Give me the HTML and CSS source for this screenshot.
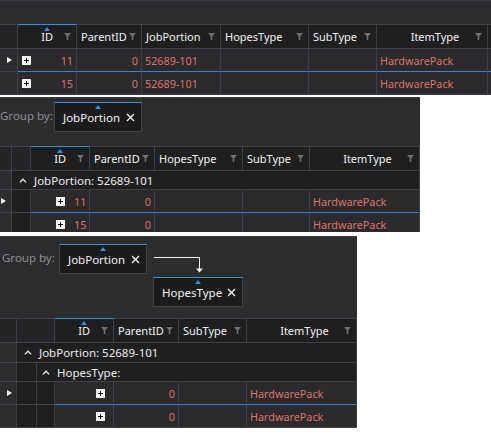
FILE: index.html
```html
<!DOCTYPE html>
<html>
<head>
<meta charset="utf-8">
<link rel="stylesheet" href="styles.css">
</head>
<body>
<!-- Panel 1 -->
<div class="grid g1">
  <div class="groupbar gb1"></div>
  <div class="row head">
    <div class="c ind"></div>
    <div class="c h num sorted"><span class="arrow"></span><span class="t">ID</span><svg class="fn" width="7" height="7" viewBox="0 0 7 7"><path d="M0 0H7L4.3 3.2V7H2.7V3.2Z"/></svg></div>
    <div class="c h"><span class="t">ParentID</span><svg class="fn" width="7" height="7" viewBox="0 0 7 7"><path d="M0 0H7L4.3 3.2V7H2.7V3.2Z"/></svg></div>
    <div class="c h"><span class="t">JobPortion</span><svg class="fn" width="7" height="7" viewBox="0 0 7 7"><path d="M0 0H7L4.3 3.2V7H2.7V3.2Z"/></svg></div>
    <div class="c h"><span class="t">HopesType</span><svg class="fn" width="7" height="7" viewBox="0 0 7 7"><path d="M0 0H7L4.3 3.2V7H2.7V3.2Z"/></svg></div>
    <div class="c h"><span class="t">SubType</span><svg class="fn" width="7" height="7" viewBox="0 0 7 7"><path d="M0 0H7L4.3 3.2V7H2.7V3.2Z"/></svg></div>
    <div class="c h center"><span class="t">ItemType</span><svg class="fn" width="7" height="7" viewBox="0 0 7 7"><path d="M0 0H7L4.3 3.2V7H2.7V3.2Z"/></svg></div>
    <div class="c h"></div>
  </div>
  <div class="row data focused">
    <div class="c ind"><span class="tri"></span></div>
    <div class="c d idc"><span class="plus"></span><span class="v">11</span></div>
    <div class="c d r">0</div>
    <div class="c d">52689-101</div>
    <div class="c d"></div>
    <div class="c d"></div>
    <div class="c d">HardwarePack</div>
    <div class="c d"></div>
  </div>
  <div class="row data">
    <div class="c ind"></div>
    <div class="c d idc"><span class="plus"></span><span class="v">15</span></div>
    <div class="c d r">0</div>
    <div class="c d">52689-101</div>
    <div class="c d"></div>
    <div class="c d"></div>
    <div class="c d">HardwarePack</div>
    <div class="c d"></div>
  </div>
</div>

<!-- Panel 2 -->
<div class="grid g2">
  <div class="inner">
    <div class="groupbar gb2">
      <span class="gblabel">Group by:</span>
      <div class="chip"><span class="arrow"></span>JobPortion<svg class="x" width="9" height="9" viewBox="0 0 9 9"><path d="M1 1L8 8M8 1L1 8"/></svg></div>
    </div>
    <div class="row head">
      <div class="c ind"></div>
      <div class="c ind2"></div>
      <div class="c h num sorted"><span class="arrow"></span><span class="t">ID</span><svg class="fn" width="7" height="7" viewBox="0 0 7 7"><path d="M0 0H7L4.3 3.2V7H2.7V3.2Z"/></svg></div>
      <div class="c h"><span class="t">ParentID</span><svg class="fn" width="7" height="7" viewBox="0 0 7 7"><path d="M0 0H7L4.3 3.2V7H2.7V3.2Z"/></svg></div>
      <div class="c h"><span class="t">HopesType</span><svg class="fn" width="7" height="7" viewBox="0 0 7 7"><path d="M0 0H7L4.3 3.2V7H2.7V3.2Z"/></svg></div>
      <div class="c h"><span class="t">SubType</span><svg class="fn" width="7" height="7" viewBox="0 0 7 7"><path d="M0 0H7L4.3 3.2V7H2.7V3.2Z"/></svg></div>
      <div class="c h center"><span class="t">ItemType</span><svg class="fn" width="7" height="7" viewBox="0 0 7 7"><path d="M0 0H7L4.3 3.2V7H2.7V3.2Z"/></svg></div>
    </div>
    <div class="row grp">
      <div class="c ind"></div>
      <div class="c gcell span2"><svg class="chev" width="8" height="5" viewBox="0 0 8 5"><path d="M0.8 4.4L4 1.2L7.2 4.4"/></svg>JobPortion: 52689-101</div>
    </div>
    <div class="row data focused f2">
      <div class="c ind"><span class="tri"></span></div>
      <div class="c indent"></div>
      <div class="c d idc2"><span class="plus"></span><span class="v">11</span></div>
      <div class="c d r">0</div>
      <div class="c d"></div>
      <div class="c d"></div>
      <div class="c d">HardwarePack</div>
    </div>
    <div class="row data">
      <div class="c ind"></div>
      <div class="c indent"></div>
      <div class="c d idc2"><span class="plus"></span><span class="v">15</span></div>
      <div class="c d r">0</div>
      <div class="c d"></div>
      <div class="c d"></div>
      <div class="c d">HardwarePack</div>
    </div>
  </div>
</div>

<!-- Panel 3 -->
<div class="grid g3">
  <div class="groupbar gb3">
    <div class="gbline">
      <span class="gblabel">Group by:</span>
      <div class="chip"><span class="arrow"></span>JobPortion<svg class="x" width="9" height="9" viewBox="0 0 9 9"><path d="M1 1L8 8M8 1L1 8"/></svg></div>
    </div>
    <div class="gbline second">
      <div class="chip"><span class="arrow"></span>HopesType<svg class="x" width="9" height="9" viewBox="0 0 9 9"><path d="M1 1L8 8M8 1L1 8"/></svg></div>
    </div>
    <svg class="conn" width="52" height="18" viewBox="0 0 52 18"><path class="ln" d="M0 0.5H45.5V12"/><path class="hd" d="M42 11.5H49L45.5 15.5Z"/></svg>
  </div>
  <div class="row head">
    <div class="c ind"></div>
    <div class="c ind2"></div>
    <div class="c h num sorted"><span class="arrow"></span><span class="t">ID</span><svg class="fn" width="7" height="7" viewBox="0 0 7 7"><path d="M0 0H7L4.3 3.2V7H2.7V3.2Z"/></svg></div>
    <div class="c h"><span class="t">ParentID</span><svg class="fn" width="7" height="7" viewBox="0 0 7 7"><path d="M0 0H7L4.3 3.2V7H2.7V3.2Z"/></svg></div>
    <div class="c h"><span class="t">SubType</span><svg class="fn" width="7" height="7" viewBox="0 0 7 7"><path d="M0 0H7L4.3 3.2V7H2.7V3.2Z"/></svg></div>
    <div class="c h center"><span class="t">ItemType</span><svg class="fn" width="7" height="7" viewBox="0 0 7 7"><path d="M0 0H7L4.3 3.2V7H2.7V3.2Z"/></svg></div>
  </div>
  <div class="row grp g1row">
    <div class="c ind"></div>
    <div class="c gcell lvl1"><svg class="chev" width="8" height="5" viewBox="0 0 8 5"><path d="M0.8 4.4L4 1.2L7.2 4.4"/></svg>JobPortion: 52689-101</div>
  </div>
  <div class="row grp g2row">
    <div class="c ind"></div>
    <div class="c indent"></div>
    <div class="c gcell lvl2"><svg class="chev" width="8" height="5" viewBox="0 0 8 5"><path d="M0.8 4.4L4 1.2L7.2 4.4"/></svg>HopesType:</div>
  </div>
  <div class="row data focused f3">
    <div class="c ind"><span class="tri"></span></div>
    <div class="c indent"></div>
    <div class="c indent"></div>
    <div class="c d idc3"><span class="plus"></span></div>
    <div class="c d r">0</div>
    <div class="c d"></div>
    <div class="c d">HardwarePack</div>
  </div>
  <div class="row data">
    <div class="c ind"></div>
    <div class="c indent"></div>
    <div class="c indent"></div>
    <div class="c d idc3"><span class="plus"></span></div>
    <div class="c d r">0</div>
    <div class="c d"></div>
    <div class="c d">HardwarePack</div>
  </div>
</div>
</body>
</html>
```
FILE: styles.css
```css
* { box-sizing: border-box; }
body {
  margin: 0;
  background: #ffffff;
  font-family: "Noto Sans", "Open Sans", sans-serif;
  font-size: 11px;
}
.grid {
  background: #2d2d30;
  overflow: hidden;
  position: relative;
}
.g1 { width: 491px; height: 95px; }
.g2 { width: 420px; height: 135px; margin-top: 2px; }
.g3 { width: 357px; height: 192px; margin-top: 4px; }
.g2 .inner { margin-left: -6px; width: 426px; }

.groupbar { background: #2d2d30; border-top: 1px solid #3a3a3e; }
.gb1 { height: 24px; }
.gb2 { height: 49px; display: flex; align-items: flex-start; padding: 4px 0 0 6px; }
.gb2 .gblabel { width: 54px; }
.gb3 { height: 82px; padding: 7px 0 0 2px; position: relative; }
.gbline { display: flex; align-items: flex-start; }
.gbline.second { padding-left: 151px; margin-top: 3px; }
.gblabel { color: #8c8c8c; margin-top: 6px; width: 57px; flex: none; font-size: 11.5px; }

.chip {
  position: relative;
  height: 30px;
  background: #1b1b1c;
  border: 1px solid #434346;
  border-top: 1px solid #3d8fe0;
  color: #f1f1f1;
  font-size: 11.5px;
  display: flex;
  align-items: center;
  padding: 0 6px 0 8px;
  width: 88px;
  flex: none;
}
.chip .x { margin-left: auto; fill: none; stroke: #f1f1f1; stroke-width: 1.4; flex: none; }
.gb3 .gbline.second .chip { width: 90px; }
.conn { position: absolute; left: 154px; top: 20px; }
.conn .ln { fill: none; stroke: #f4f4f4; stroke-width: 1; }
.conn .hd { fill: #f4f4f4; }

.arrow {
  position: absolute;
  top: 2px;
  left: 50%;
  margin-left: -3.5px;
  width: 0; height: 0;
  border-left: 3.5px solid transparent;
  border-right: 3.5px solid transparent;
  border-bottom: 4px solid #2f8ee6;
}

.row { display: grid; }
.g1 .row { grid-template-columns: 18px 59px 65px 79px 88px 68px 111px 3px; }
.g2 .row { grid-template-columns: 18px 19px 59px 65px 88px 67px 110px; }
.g3 .row { grid-template-columns: 17px 20px 18px 59px 65px 68px 110px; }
.g3 .row.head { grid-template-columns: 17px 38px 59px 65px 68px 110px; }
.g3 .row.g1row { grid-template-columns: 17px 340px; }
.g3 .row.g2row { grid-template-columns: 17px 20px 320px; }
.g2 .row.grp { grid-template-columns: 18px 408px; }

.c {
  border-right: 1px solid #3f3f46;
  border-bottom: 1px solid #3f3f46;
  display: flex;
  align-items: center;
  min-width: 0;
  white-space: nowrap;
  overflow: hidden;
}
.head .c {
  height: 25px;
  background: #1f1f20;
  border-top: 1px solid #3f3f46;
  color: #f1f1f1;
  font-size: 11px;
  position: relative;
}
.head .c.h { padding: 0 5px 0 4px; justify-content: space-between; }
.head .c.num { justify-content: flex-end; }
.head .c.num .t { margin-right: 11px; }
.head .c.center .t { margin-left: auto; margin-right: auto; padding-left: 14px; }
.head .c.sorted { border-top: 1px solid #3a8ee6; }
.head .c.ind, .head .c.ind2 { background: #252527; }
.fn { fill: #707072; flex: none; }

.data .c { height: 23px; background: #2b2b2e; color: #dc716b; font-size: 10.8px; }
.data .c.ind { background: #2d2d30; justify-content: flex-start; padding-left: 7px; }
.data .c.indent { background: #1f1f20; }
.data .c.d { padding: 0 3px; }
.data .c.r { justify-content: flex-end; }
.data.focused .c.d { border-bottom: 1px solid #3b7fd9; }
.tri {
  width: 0; height: 0;
  border-top: 3.5px solid transparent;
  border-bottom: 3.5px solid transparent;
  border-left: 5px solid #f4f4f4;
}
.plus {
  width: 9px; height: 9px;
  background: #f4f4f4;
  position: relative;
  flex: none;
}
.plus::before, .plus::after { content: ""; position: absolute; background: #111; }
.plus::before { left: 2px; right: 2px; top: 4px; height: 1px; }
.plus::after { top: 2px; bottom: 2px; left: 4px; width: 1px; }
.idc { padding-left: 4px !important; }
.idc .v { margin-left: auto; }
.idc2 { padding-left: 25px !important; }
.idc2 .v { margin-left: 9px; }
.idc3 { justify-content: flex-end; padding-right: 8px !important; }

.grp .c { background: #1f1f20; color: #ececec; font-size: 11.5px; }
.g2 .grp .c { height: 19px; }
.g3 .g1row .c { height: 20px; }
.g3 .g2row .c { height: 19px; }
.grp .c.ind { background: #2d2d30; }
.grp .c.indent { background: #1f1f20; }
.gcell { padding-left: 7px; }
.lvl2 { padding-left: 5px; }
.chev { fill: none; stroke: #ececec; stroke-width: 1.3; margin-right: 7px; flex: none; }
```
